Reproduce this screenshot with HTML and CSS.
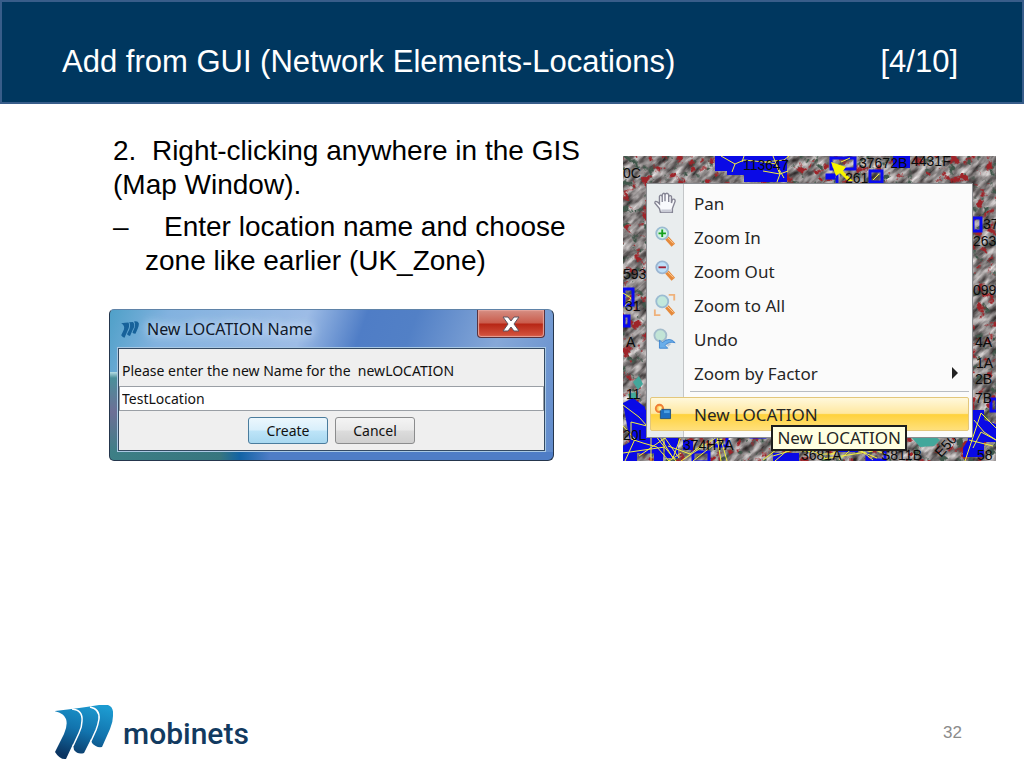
FILE: index.html
```html
<!DOCTYPE html>
<html lang="en">
<head>
    <meta charset="UTF-8">
    <meta name="viewport" content="width=device-width, initial-scale=1.0">
    <title>Add from GUI (Network Elements-Locations)</title>
    <link rel="stylesheet" href="styles.css">
</head>
<body>
    <header class="title-bar">
        <h1>Add from GUI (Network Elements-Locations)</h1>
        <span>[4/10]</span>
    </header>

    <main class="content">
        <section class="left">
            <div class="steps">
                <p>2.&nbsp; Right-clicking anywhere in the GIS (Map Window).</p>
                <p class="sub-step"><span class="dash">–</span>Enter location name and choose zone like earlier (UK_Zone)</p>
            </div>

            <form class="dialog">
                <div class="dialog-title">
                    <svg class="dialog-logo" viewBox="0 0 58 56">
                        <path d="M0 7Q14 5 24 5Q27 10 26 17Q25 24 22 30L11 55Q5 54 0 47L9 28Q13 14 0 7Z"/>
                        <path d="M26 4L39 3Q45 9 43 17Q42 23 38 29L29 49Q22 48 19 44L27 27Q32 12 26 4Z"/>
                        <path d="M42 2Q55-1 58 7Q59 15 55 24L47 42Q40 42 37 38L44 22Q48 9 42 2Z"/>
                    </svg>
                    <h2>New LOCATION Name</h2>
                    <button type="button" class="close" aria-label="Close">
                        <svg viewBox="0 0 18 16">
                            <path d="M1 1h5l3 4 3-4h5l-5 7 5 7h-5l-3-4-3 4H1l5-7z"/>
                        </svg>
                    </button>
                </div>
                <div class="dialog-body">
                    <label for="locationName">Please enter the new Name for the&nbsp; newLOCATION</label>
                    <input type="text" id="locationName" value="TestLocation">
                    <div class="dialog-buttons">
                        <button type="button" class="btn create">Create</button>
                        <button type="button" class="btn">Cancel</button>
                    </div>
                </div>
            </form>
        </section>

        <section class="map">
            <svg class="terrain" viewBox="0 0 373 305" preserveAspectRatio="xMidYMid slice">
                <defs>
                    <filter id="rock" x="0" y="0" width="100%" height="100%" color-interpolation-filters="sRGB">
                        <feTurbulence type="fractalNoise" baseFrequency="0.07 0.17" numOctaves="3" seed="8"/>
                        <feColorMatrix values="1.1 0 0 0 -0.01  1.1 0 0 0 -0.03  1.1 0 0 0 -0.03  0 0 0 0 1"/>
                    </filter>
                    <filter id="redSpots" x="0" y="0" width="100%" height="100%" color-interpolation-filters="sRGB">
                        <feTurbulence type="fractalNoise" baseFrequency="0.11" numOctaves="4" seed="21"/>
                        <feColorMatrix values="0 0 0 0 0.62  0 0 0 0 0.14  0 0 0 0 0.16  8 0 0 0 -4.8"/>
                    </filter>
                    <filter id="greenSpots" x="0" y="0" width="100%" height="100%" color-interpolation-filters="sRGB">
                        <feTurbulence type="fractalNoise" baseFrequency="0.12" numOctaves="4" seed="37"/>
                        <feColorMatrix values="0 0 0 0 0.25  0 0 0 0 0.34  0 0 0 0 0.29  7 0 0 0 -4.3"/>
                    </filter>
                </defs>
                <rect x="-150" y="-150" width="680" height="620" transform="rotate(-42 186 152)" filter="url(#rock)"/>
                <rect width="373" height="305" filter="url(#greenSpots)"/>
                <rect width="373" height="305" filter="url(#redSpots)"/>
                <g class="water">
                    <path d="M10 226l6-6 4 8-5 6zM5 238l7-2 3 6-8 2zM289 282l10-3 12 1 6 4-6 6-14 1z"/>
                </g>
                <g class="zone">
                    <path d="M92 0h72v26h-43v-7h-17v-4H92zM270 0h17v12h-17zM0 247l10-5 12 9v14l6 4v10l12 4v22h-9v-8H14v8H0v-15l7-4zM345 268l4-14h12v10l12 4v18h-12v15h-21v-9l5-8zM42 280h13v22H42zM60 284h10v10H60zM215 288h20v8h-20zM150 297h26v8h-26z"/>
                </g>
                <g class="box">
                    <path d="M208 2h24v11h-24zM212 22h-8v-3h10v8M247 15h12v11h-12zM350 62h8v13h-8zM1 133h9v16H1zM1 160h5v10H1zM368 243h6v12h-6zM92 278h12v12H92zM128 276h14v5h-14zM8 255h14v14H8zM18 282h14v14H18zM70 296h16v10H70zM244 292h18v12h-18z"/>
                </g>
                <g class="link">
                    <path d="M98 0l14 8 9-4 20 2 12 2 4 10-3 8M112 8l-3 8M121 0l-2 6M141 6l20-2 5-4M153 8l8 14M150 0l7 18 8-3M140 15l17 3M0 137l8 5-6 8M218 6l9-4M250 24l6-6"/>
                    <path d="M0 249l16 12 8 9-16-4v17l12 4 14 4 12 14 12-8M0 270l12 13-10 22M25 270l14 18 14 17M16 300l26-18 14 20M28 305v-24M45 290l22 8 13-10M58 305l36-24 4 24M70 305l28-22 6 22M0 297l42-6M34 276l16 26 8-22"/>
                    <path d="M150 300l20-6 22 2 10 6M194 298h18M208 298l18-8 22 2 18 8M216 304l16-14 18 14M230 292l24 10M140 304l18-14M152 305l14-12M200 303l50-8M342 305l16-48 15 15M351 264l10 12 12 8M350 292l8-16 15 8M346 284l24 6"/>
                </g>
                <path class="arrow" d="M208 6l15 5-3 4 10 10h-5l-8-8-4 3z"/>
                <g class="map-label">
                    <text x="0" y="22">0C</text>
                    <text x="0" y="123">593</text>
                    <text x="2" y="155">31</text>
                    <text x="3" y="191">A</text>
                    <text x="3" y="243">11</text>
                    <text x="0" y="284">20L</text>
                    <text x="120" y="14">113647</text>
                    <text x="236" y="12">37672B</text>
                    <text x="288" y="10">4431F</text>
                    <text x="222" y="27">261</text>
                    <text x="360" y="73">37</text>
                    <text x="350" y="90">263</text>
                    <text x="350" y="139">099</text>
                    <text x="352" y="191">4A</text>
                    <text x="353" y="212">1A</text>
                    <text x="352" y="228">2B</text>
                    <text x="352" y="247">7B</text>
                    <text x="60" y="294">374H7A</text>
                    <text x="258" y="304">S811B</text>
                    <text x="178" y="304">3681A</text>
                    <text x="354" y="304">58</text>
                    <text transform="translate(318 302) rotate(-48)">E50</text>
                </g>
            </svg>

            <div class="menu">
                <button type="button" class="menu-item">
                    <svg viewBox="0 0 26 26">
                        <path d="M8 23L7 19 2 13Q2 10 5 12L7 14V6Q8 3 10 6V12V4Q12 1 13 4V11V4Q15 1 17 4V12V6Q19 4 20 6V13L21 9Q24 8 24 11L21 19V23Z" fill="#f8f9fc" stroke="#858594" stroke-width="1.5"/>
                        <path d="M9 20h11v3H9z" fill="#c9cbd6"/>
                    </svg>
                    Pan
                </button>
                <button type="button" class="menu-item">
                    <svg viewBox="0 0 26 26">
                        <path d="M15 14L22 22" stroke="#e58a3c" stroke-width="5"/>
                        <path d="M15 13L22 20" stroke="#ffd2a0" stroke-width="1"/>
                        <circle cx="10" cy="9" r="6.5" fill="#d3f2e4" stroke="#9bbcd2" stroke-width="2"/>
                        <path d="M6 9h8M10 5v8" stroke="#16a01d" stroke-width="2"/>
                    </svg>
                    Zoom In
                </button>
                <button type="button" class="menu-item">
                    <svg viewBox="0 0 26 26">
                        <path d="M15 14L22 22" stroke="#e58a3c" stroke-width="5"/>
                        <path d="M15 13L22 20" stroke="#ffd2a0" stroke-width="1"/>
                        <circle cx="10" cy="9" r="6.5" fill="#bedff8" stroke="#9bb6d2" stroke-width="2"/>
                        <path d="M6 9h8" stroke="#a02137" stroke-width="2"/>
                    </svg>
                    Zoom Out
                </button>
                <button type="button" class="menu-item">
                    <svg viewBox="0 0 26 26">
                        <path d="M17 2h6v6M2 18v6h6" fill="none" stroke="#efb27c" stroke-width="2"/>
                        <path d="M15 15L22 23" stroke="#e58a3c" stroke-width="5"/>
                        <path d="M15 14L22 21" stroke="#ffd2a0" stroke-width="1"/>
                        <circle cx="10" cy="9" r="6.5" fill="#c2e8dc" stroke="#9bbcd2" stroke-width="2"/>
                    </svg>
                    Zoom to All
                </button>
                <button type="button" class="menu-item">
                    <svg viewBox="0 0 26 26">
                        <path d="M12 13L18 20" stroke="#b9c9d9" stroke-width="4"/>
                        <circle cx="8" cy="9" r="6.5" fill="#c2e4d6" stroke="#a3bccb" stroke-width="2"/>
                        <path d="M7 14V23H16L13 20Q17 15 24 17Q18 10 10 17Z" fill="#6aaeea" stroke="#3f86cf" stroke-width="1"/>
                    </svg>
                    Undo
                </button>
                <button type="button" class="menu-item">
                    <span class="no-icon"></span>
                    Zoom by Factor
                    <span class="submenu-arrow"></span>
                </button>
                <hr>
                <button type="button" class="menu-item selected">
                    <svg viewBox="0 0 26 26">
                        <circle cx="7" cy="7" r="4" fill="#ffc95b" stroke="#f07e35" stroke-width="2"/>
                        <path d="M8 8h11v10H8z" fill="#1f6fc0" stroke="#24527e" stroke-width="1"/>
                        <path d="M12 9h6v3h-6z" fill="#4ea2e6"/>
                        <path d="M6 5h3v4H6z" fill="#fff1a5"/>
                    </svg>
                    New LOCATION
                </button>
                <span class="tooltip">New LOCATION</span>
            </div>
        </section>
    </main>

    <footer>
        <div class="brand">
            <svg viewBox="0 0 58 56">
                <defs>
                    <linearGradient id="ribbon" gradientUnits="userSpaceOnUse" x1="40" y1="0" x2="24" y2="54">
                        <stop offset="0" stop-color="#1c9ad0"/>
                        <stop offset="0.5" stop-color="#1273ad"/>
                        <stop offset="1" stop-color="#0b3562"/>
                    </linearGradient>
                </defs>
                <path fill="url(#ribbon)" d="M-1 6Q26 3 44 0H53Q59 2 58 11Q58 17 55 24L47 42Q41 43 37 38L36 34 29 48Q23 50 19 45L18 39 11 54Q5 55 0 47L9 29Q13 20 11 14Q9 8 -1 6Z"/>
                <path d="M17 4Q28 5 27 16Q27 22 24 28L18 41M35 2Q45 4 44 14Q43 20 41 25L36 36" fill="none" stroke="white" stroke-width="1.5"/>
            </svg>
            <span>mobinets</span>
        </div>
        <span class="page-number">32</span>
    </footer>
</body>
</html>
```
FILE: styles.css
```css
* {
    box-sizing: border-box;
}
body {
    margin: 0;
    min-height: 100vh;
    display: flex;
    flex-direction: column;
    background-color: white;
    color: #000;
    font-family: "Liberation Sans", Arial, sans-serif;
}
h1, h2, p {
    margin: 0;
    font-weight: normal;
}
button {
    font-family: inherit;
    cursor: pointer;
}
.title-bar {
    display: flex;
    justify-content: space-between;
    padding: 42px 64px 22px 60px;
    background-color: #00375f;
    border: 2px solid #385d8a;
    color: white;
    font-size: 31px;
    line-height: 36px;
}
.title-bar h1 {
    font-size: 31px;
}
.content {
    display: grid;
    grid-template-columns: minmax(0, 482px) minmax(0, 373px);
    justify-content: space-between;
    align-items: start;
    padding: 30px 28px 0 109px;
}

/* left side */
.steps {
    padding-left: 4px;
    font-size: 28px;
    line-height: 34px;
}
.sub-step {
    margin-top: 8px;
    padding-left: 32px;
    text-indent: -32px;
}
.dash {
    display: inline-block;
    width: 51px;
    text-indent: 0;
}
.dialog {
    max-width: 445px;
    margin-top: 31px;
    padding: 0 8px 9px;
    border: 1px solid #25364d;
    border-top-color: #5f83a8;
    border-radius: 5px 6px 6px 5px;
    background:
        linear-gradient(90deg, #3d7f86 0, #37767f 110px, #1263a5 130px, #4f7dc6 160px) bottom / 100% 8px no-repeat,
        linear-gradient(#b5dde5 0, #4a8f9a 6px, #6d6f96 40px, #3d7f86 80px) left bottom / 8px 88px no-repeat,
        linear-gradient(110deg, #4fa0c8 0, #82b2df 12%, #9dbce6 40%, #4f7dc6 52%, #5280c6 62%, #86a8d8 80%, #5f8acb 100%);
    font-family: "Noto Sans", sans-serif;
}
.dialog-title {
    display: flex;
    align-items: center;
    height: 38px;
}
.dialog-logo {
    width: 18px;
    height: 17px;
    margin: 0 8px 0 3px;
    fill: #17629a;
}
.dialog h2 {
    flex: 1;
    color: #10192a;
    font-size: 16px;
    text-shadow: 0 0 8px #d5e6fa, 0 0 12px #d5e6fa;
}
.close {
    align-self: flex-start;
    width: 68px;
    height: 28px;
    padding: 0;
    border: 1px solid #58323e;
    border-top: none;
    border-radius: 0 0 4px 4px;
    background: linear-gradient(#d58e83 0, #ca5c4c 48%, #b72615 52%, #d55742 100%);
    box-shadow: inset 0 0 1px 1px #e5a39b;
}
.close svg {
    display: block;
    width: 18px;
    height: 16px;
    margin: 0 auto;
    fill: white;
    stroke: #5e5560;
    stroke-width: 1;
}
.dialog-body {
    border: 1px solid #344a62;
    box-shadow: 0 0 0 1px #a9c8e3;
    background-color: #efefef;
    color: #111;
    font-size: 14px;
}
.dialog-body label {
    display: block;
    padding: 9px 3px 2px;
    line-height: 26px;
}
.dialog-body input {
    display: block;
    width: 100%;
    height: 25px;
    padding: 0 2px;
    border: 1px solid #9a9fa5;
    background-color: white;
    color: #111;
    font-family: inherit;
    font-size: 14px;
}
.dialog-buttons {
    display: flex;
    justify-content: center;
    gap: 7px;
    padding: 6px 0;
}
.btn {
    width: 80px;
    height: 27px;
    padding: 0;
    border: 1px solid #8b8c8d;
    border-radius: 3px;
    background: linear-gradient(#f4f4f4 0, #e9e9e9 48%, #dcdcdc 52%, #cfcfcf 100%);
    color: #111;
    font-size: 14px;
}
.btn.create {
    border-color: #4a7c9d;
    background: linear-gradient(#ecf7fd 0, #d8effb 48%, #bde4f8 52%, #a8d8f0 100%);
}

/* map with context menu */
.map {
    position: relative;
    margin-top: 22px;
    padding: 27px 23px 23px;
    background-color: #858585;
}
.terrain {
    position: absolute;
    inset: 0;
    width: 100%;
    height: 100%;
}
.water {
    fill: #43a79b;
}
.zone {
    fill: #0a0ae6;
}
.box {
    fill: none;
    stroke: #0a0af0;
    stroke-width: 3;
}
.link {
    fill: none;
    stroke: #f5f03c;
    stroke-width: 1;
}
.arrow {
    fill: #f8f500;
}
.map-label {
    fill: #0a0a0a;
    font-size: 14px;
}
.menu {
    position: relative;
    padding: 2px 3px 6px;
    border: 1px solid #8a8c90;
    background: linear-gradient(90deg, #e9edee 36px, #c3c6c8 36px, #c3c6c8 37px, #fbfbfb 37px);
    font-family: "Noto Sans", sans-serif;
}
.menu-item {
    display: flex;
    align-items: center;
    width: 100%;
    height: 34px;
    padding: 0 10px 0 2px;
    border: 1px solid transparent;
    background: none;
    color: #262626;
    font-size: 17px;
    text-align: left;
}
.menu-item svg, .no-icon {
    width: 24px;
    height: 24px;
    margin-right: 17px;
}
.submenu-arrow {
    margin-left: auto;
    border: 6px solid transparent;
    border-left-color: #222;
    border-right: none;
}
.menu hr {
    height: 1px;
    margin: 1px 0 5px 40px;
    border: none;
    background-color: #b9bdc2;
}
.menu-item.selected {
    border-color: #e3c77b;
    border-radius: 2px;
    background: linear-gradient(#fff8dc 0, #ffe8a0 48%, #ffd23c 52%, #ffe07c 100%);
}
.tooltip {
    position: absolute;
    right: 65px;
    bottom: -14px;
    padding: 0 4px;
    border: 2px solid #1d1d1d;
    background-color: #ffffe1;
    color: #262626;
    font-size: 17px;
    line-height: 22px;
}

/* bottom of the slide */
footer {
    display: flex;
    justify-content: space-between;
    align-items: center;
    margin-top: auto;
    padding: 0 62px 7px 55px;
}
.brand {
    display: flex;
    align-items: center;
    gap: 10px;
    color: #123a60;
    font-family: Roboto, sans-serif;
    font-size: 30px;
    font-weight: 500;
}
.brand svg {
    width: 58px;
    height: 56px;
}
.page-number {
    color: #8b8b8b;
    font-size: 17px;
}
```
